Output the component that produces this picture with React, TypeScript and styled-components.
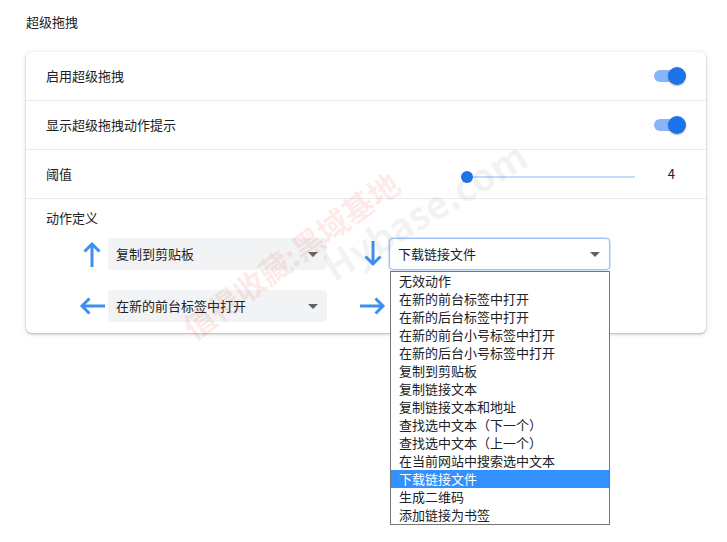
import React from 'react';
import styled, { createGlobalStyle } from 'styled-components';

const GlobalStyle = createGlobalStyle`
  html, body {
    margin: 0;
    padding: 0;
    background: #ffffff;
  }
  body {
    font-family: "Noto Sans CJK SC", "Noto Sans", Arial, sans-serif;
    font-size: 13px;
    color: #202124;
  }
`;

const Page = styled.div`
  position: relative;
  width: 727px;
  height: 542px;
  overflow: hidden;
  padding: 12px 21px 0 26px;
  box-sizing: border-box;
`;

const Title = styled.div`
  font-size: 13px;
  line-height: 20px;
  color: #202124;
  margin-bottom: 20px;
`;

const Card = styled.div`
  width: 680px;
  background: #fff;
  border-radius: 6px;
  box-shadow: 0 1px 2px rgba(60, 64, 67, 0.3), 0 1px 4px 1px rgba(60, 64, 67, 0.12);
`;

const Row = styled.div<{ $first?: boolean }>`
  display: flex;
  align-items: center;
  height: 48px;
  padding: 0 20px;
  border-top: ${p => (p.$first ? 'none' : '1px solid #e8eaed')};
`;

const Label = styled.div`
  flex: 1;
  line-height: 20px;
`;

const Toggle = styled.div`
  position: relative;
  width: 28px;
  height: 12px;
  margin-right: 4px;
  border-radius: 6px;
  background: #8ab4f8;
  &::after {
    content: "";
    position: absolute;
    right: -4px;
    top: -3px;
    width: 18px;
    height: 18px;
    border-radius: 50%;
    background: #1a73e8;
    box-shadow: 0 1px 2px rgba(0, 0, 0, 0.3);
  }
`;

const Slider = styled.div`
  position: relative;
  width: 168px;
  height: 2px;
  margin-top: 6px;
  background: #c6dafc;
  &::before {
    content: "";
    position: absolute;
    left: -6px;
    top: -5px;
    width: 12px;
    height: 12px;
    border-radius: 50%;
    background: #1a73e8;
  }
`;

const SliderValue = styled.div`
  width: 40px;
  text-align: right;
  padding-right: 11px;
  line-height: 20px;
  color: #202124;
`;

const ActionSection = styled.div`
  border-top: 1px solid #e8eaed;
  padding: 9px 20px 11px;
`;

const ActionGrid = styled.div`
  display: grid;
  grid-template-columns: 32px 219px 62px 221px;
  row-gap: 20px;
  margin: 10px 0 0 30px;
  & > :nth-child(4n + 3) {
    margin-left: 30px;
  }
`;

const ArrowCell = styled.div`
  display: flex;
  align-items: center;
  justify-content: center;
  height: 32px;
`;

const SelectBox = styled.div<{ $open?: boolean }>`
  position: relative;
  display: flex;
  align-items: center;
  height: 32px;
  box-sizing: border-box;
  padding: 0 8px;
  border-radius: 4px;
  background: ${p => (p.$open ? '#fff' : '#f1f3f4')};
  border: ${p => (p.$open ? '1px solid #9fc1f7' : 'none')};
  box-shadow: ${p => (p.$open ? '0 0 0 1px #d2e3fc' : 'none')};
  color: #202124;
`;

const SelectText = styled.span`
  flex: 1;
  line-height: 20px;
`;

const Caret = styled.span`
  width: 0;
  height: 0;
  margin-right: 1px;
  border-left: 5px solid transparent;
  border-right: 5px solid transparent;
  border-top: 5px solid #5f6368;
`;

const DropList = styled.ul`
  position: absolute;
  left: 0;
  top: 32px;
  width: 220px;
  margin: 0;
  padding: 0;
  list-style: none;
  background: #fff;
  border: 1px solid #767676;
  box-sizing: border-box;
  z-index: 5;
`;

const DropItem = styled.li<{ $active?: boolean }>`
  height: 18px;
  line-height: 18px;
  padding-left: 8px;
  font-size: 13px;
  background: ${p => (p.$active ? '#3390ff' : '#fff')};
  color: ${p => (p.$active ? '#fff' : '#202124')};
  white-space: nowrap;
`;

const Watermark = styled.div<{ $color: string; $size: number; $angle: number }>`
  position: absolute;
  pointer-events: none;
  font-family: "Noto Sans CJK SC", "Liberation Sans", sans-serif;
  font-weight: 700;
  font-size: ${p => p.$size}px;
  line-height: 1;
  color: ${p => p.$color};
  transform: rotate(${p => p.$angle}deg);
  transform-origin: left center;
  white-space: nowrap;
  z-index: 4;
`;

type Dir = 'up' | 'down' | 'left' | 'right';

const rot: Record<Dir, number> = { up: 0, right: 90, down: 180, left: 270 };

function Arrow({ dir }: { dir: Dir }) {
  return (
    <svg width="28" height="28" viewBox="0 0 28 28" style={{ transform: `rotate(${rot[dir]}deg)` }}>
      <path d="M14 4 L14 27" stroke="#3c8ff0" strokeWidth="3" />
      <path d="M6.5 11.5 L14 4 L21.5 11.5" stroke="#3c8ff0" strokeWidth="3" fill="none" />
    </svg>
  );
}

const options = [
  '无效动作',
  '在新的前台标签中打开',
  '在新的后台标签中打开',
  '在新的前台小号标签中打开',
  '在新的后台小号标签中打开',
  '复制到剪贴板',
  '复制链接文本',
  '复制链接文本和地址',
  '查找选中文本（下一个）',
  '查找选中文本（上一个）',
  '在当前网站中搜索选中文本',
  '下载链接文件',
  '生成二维码',
  '添加链接为书签',
];

export default function App() {
  return (
    <>
      <GlobalStyle />
      <Page>
        <Title>超级拖拽</Title>
        <Card>
          <Row $first>
            <Label>启用超级拖拽</Label>
            <Toggle />
          </Row>
          <Row>
            <Label>显示超级拖拽动作提示</Label>
            <Toggle />
          </Row>
          <Row>
            <Label>阈值</Label>
            <Slider />
            <SliderValue>4</SliderValue>
          </Row>
          <ActionSection>
            <Label>动作定义</Label>
            <ActionGrid>
              <ArrowCell><Arrow dir="up" /></ArrowCell>
              <SelectBox>
                <SelectText>复制到剪贴板</SelectText>
                <Caret />
              </SelectBox>
              <ArrowCell><Arrow dir="down" /></ArrowCell>
              <SelectBox $open>
                <SelectText>下载链接文件</SelectText>
                <Caret />
                <DropList>
                  {options.map(o => (
                    <DropItem key={o} $active={o === '下载链接文件'}>{o}</DropItem>
                  ))}
                </DropList>
              </SelectBox>
              <ArrowCell><Arrow dir="left" /></ArrowCell>
              <SelectBox>
                <SelectText>在新的前台标签中打开</SelectText>
                <Caret />
              </SelectBox>
              <ArrowCell><Arrow dir="right" /></ArrowCell>
              <div />
            </ActionGrid>
          </ActionSection>
        </Card>
        <Watermark $color="rgba(240, 90, 80, 0.12)" $size={31} $angle={-36} style={{ left: 186, top: 315 }}>
          值得收藏:黑域基地
        </Watermark>
        <Watermark $color="rgba(120, 120, 120, 0.09)" $size={38} $angle={-31} style={{ left: 326, top: 250 }}>
          Hybase.com
        </Watermark>
      </Page>
    </>
  );
}
